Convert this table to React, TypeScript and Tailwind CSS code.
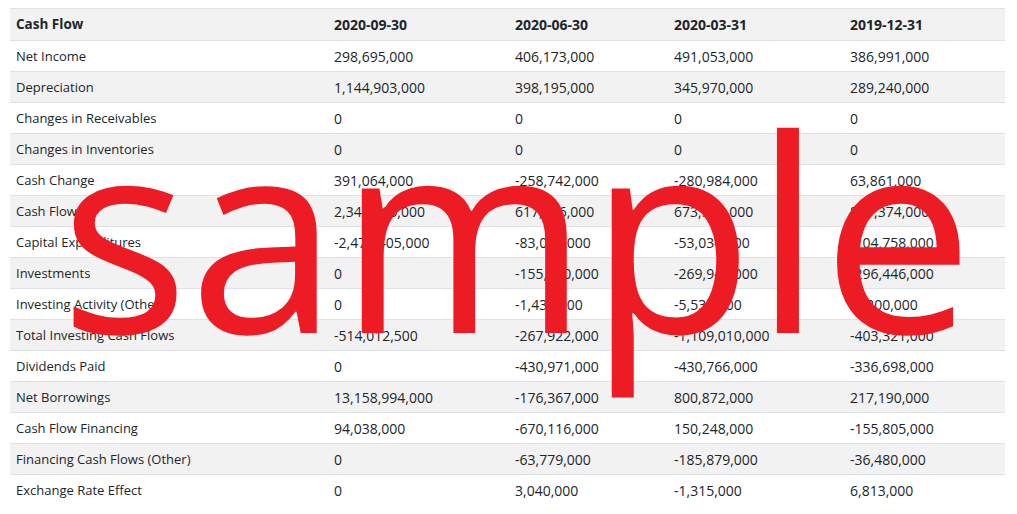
const rows: [string, string, string, string, string][] = [
  ["Net Income", "298,695,000", "406,173,000", "491,053,000", "386,991,000"],
  ["Depreciation", "1,144,903,000", "398,195,000", "345,970,000", "289,240,000"],
  ["Changes in Receivables", "0", "0", "0", "0"],
  ["Changes in Inventories", "0", "0", "0", "0"],
  ["Cash Change", "391,064,000", "-258,742,000", "-280,984,000", "63,861,000"],
  ["Cash Flow", "2,341,216,000", "617,056,000", "673,510,000", "819,374,000"],
  ["Capital Expenditures", "-2,470,405,000", "-83,085,000", "-53,034,000", "-104,758,000"],
  ["Investments", "0", "-155,380,000", "-269,945,000", "-296,446,000"],
  ["Investing Activity (Other)", "0", "-1,435,000", "-5,539,000", "-2,200,000"],
  ["Total Investing Cash Flows", "-514,012,500", "-267,922,000", "-1,109,010,000", "-403,321,000"],
  ["Dividends Paid", "0", "-430,971,000", "-430,766,000", "-336,698,000"],
  ["Net Borrowings", "13,158,994,000", "-176,367,000", "800,872,000", "217,190,000"],
  ["Cash Flow Financing", "94,038,000", "-670,116,000", "150,248,000", "-155,805,000"],
  ["Financing Cash Flows (Other)", "0", "-63,779,000", "-185,879,000", "-36,480,000"],
  ["Exchange Rate Effect", "0", "3,040,000", "-1,315,000", "6,813,000"],
];

const dates = ["2020-09-30", "2020-06-30", "2020-03-31", "2019-12-31"];

export default function App() {
  return (
    <div className="relative h-[514px] w-[1017px] overflow-hidden bg-white pl-[10px] pt-[8px] font-['Open_Sans','Noto_Sans',sans-serif] text-[13px] text-[#212529]">
      <table className="w-[995px] table-fixed border-collapse">
        <colgroup>
          <col className="w-[318px]" />
          <col className="w-[181px]" />
          <col className="w-[159px]" />
          <col className="w-[176px]" />
          <col className="w-[161px]" />
        </colgroup>
        <thead>
          <tr className="h-[32px] border-y border-[#dee2e6] bg-[#f2f2f2]">
            <th className="px-[6px] text-left text-[13.5px] font-bold">Cash Flow</th>
            {dates.map((d) => (
              <th key={d} className="px-[6px] text-left text-[14px] font-bold">
                {d}
              </th>
            ))}
          </tr>
        </thead>
        <tbody>
          {rows.map((r, i) => (
            <tr
              key={r[0]}
              className={`h-[31px] border-b border-[#dee2e6] last:border-b-0 ${i % 2 === 1 ? "bg-[#f2f2f2]" : "bg-white"}`}
            >
              {r.map((c, j) => (
                <td key={j} className={`px-[6px] pt-[1px] text-left ${j > 0 ? "text-[14px]" : ""}`}>
                  {c}
                </td>
              ))}
            </tr>
          ))}
        </tbody>
      </table>

      {/* watermark */}
      <div className="pointer-events-none absolute left-[60px] top-[93px] font-['Open_Sans',sans-serif] text-[270px] leading-none text-[#ed1c24]">
        sample
      </div>
    </div>
  );
}
